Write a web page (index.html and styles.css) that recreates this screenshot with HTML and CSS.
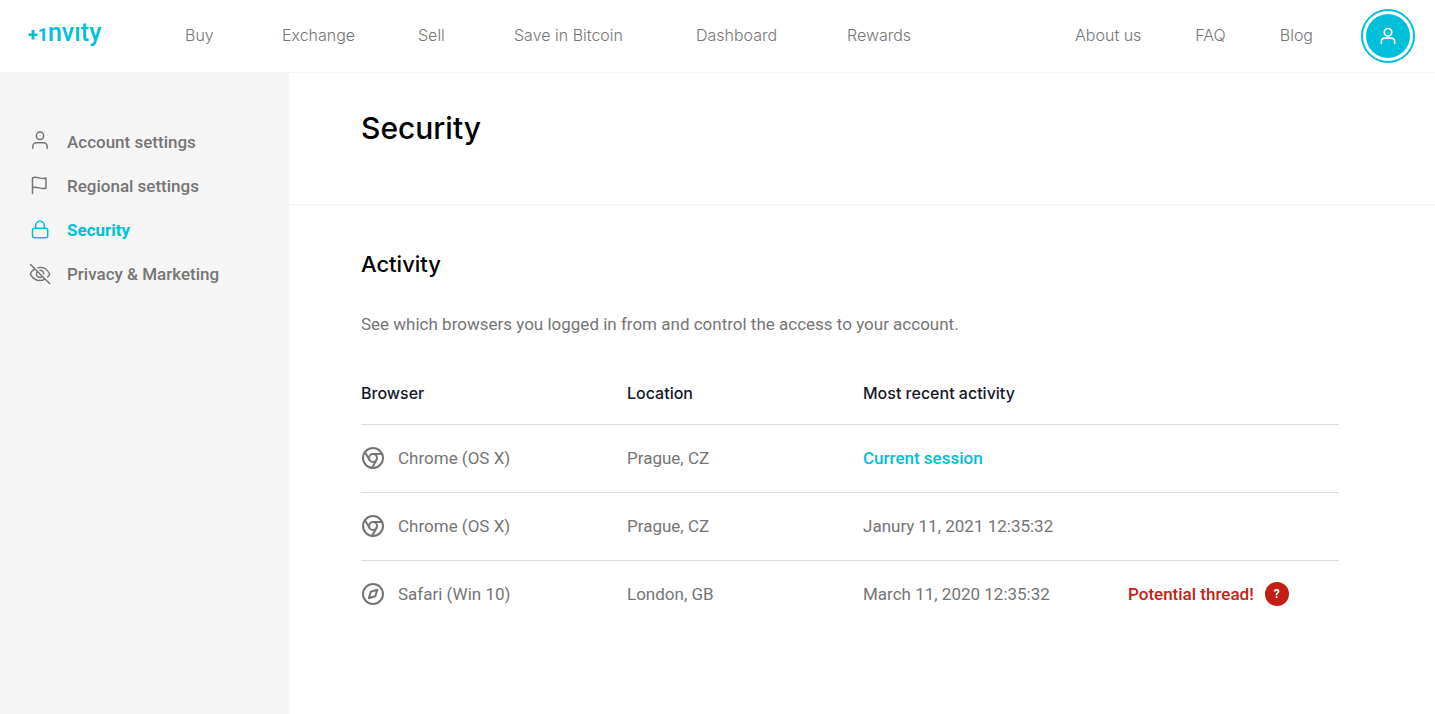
FILE: index.html
```html
<!DOCTYPE html>
<html lang="en">
<head>
<meta charset="utf-8">
<meta name="viewport" content="width=device-width, initial-scale=1">
<title>Invity – Security</title>
<link rel="stylesheet" href="styles.css">
</head>
<body>
<svg width="0" height="0" class="sprite" aria-hidden="true">
  <symbol id="chrome" viewBox="0 0 24 24"><circle cx="12" cy="12" r="10"/><circle cx="12" cy="12" r="4"/><path d="M21 8H12M4 6.200l4.500 7.800M11 21.900l4.400-7.900"/></symbol>
  <symbol id="compass" viewBox="0 0 24 24"><circle cx="12" cy="12" r="10"/><path d="M16.300 7.700l-2 6.500-6.500 2.100 2-6.500z"/></symbol>
</svg>
<header class="topbar">
  <a class="logo" href="#"><span class="logo-plus">+</span><span class="logo-one">1</span><span>nvıty</span></a>
  <nav class="main-nav" aria-label="Main">
    <a href="#">Buy</a>
    <a href="#">Exchange</a>
    <a href="#">Sell</a>
    <a href="#">Save in Bitcoin</a>
    <a href="#">Dashboard</a>
    <a href="#">Rewards</a>
  </nav>
  <nav class="side-nav" aria-label="Company">
    <a href="#">About us</a>
    <a href="#">FAQ</a>
    <a href="#">Blog</a>
  </nav>
  <button class="avatar" aria-label="Account">
    <svg class="avatar-icon" viewBox="0 0 24 24"><circle cx="12" cy="7.500" r="4.500"/><path d="M4 21v-2.500A4 4 0 0 1 8 14.500h8a4 4 0 0 1 4 4V21"/></svg>
  </button>
</header>
<div class="layout">
  <aside class="sidebar">
    <a class="side-link" href="#"><svg class="icon" viewBox="0 0 24 24"><circle cx="12" cy="5.800" r="3.700"/><path d="M4.800 18.300v-2a3.600 3.600 0 0 1 3.600-3.600h7.200a3.600 3.600 0 0 1 3.600 3.600v2"/></svg>Account settings</a>
    <a class="side-link" href="#"><svg class="icon" viewBox="0 0 24 24"><path d="M4.500 19.500V4c4-2.500 8.500 2.200 13.500 0v10c-5 2.200-9.500-2.500-13.500 0"/></svg>Regional settings</a>
    <a class="side-link active" href="#" aria-current="page"><svg class="icon" viewBox="0 0 24 24"><rect x="4.500" y="10.300" width="15.200" height="9.500" rx="2"/><path d="M7.700 10.300V7.500a4.300 4.300 0 0 1 8.600 0v2.800"/></svg>Security</a>
    <a class="side-link" href="#"><svg class="icon" viewBox="0 0 24 24"><path d="M2.500 2.500l19 19M7 6.800C4.800 8 3.200 10 2.300 12c2.600 5.500 9 8.700 14.800 4.800M10 5.700c5-1.200 9.500 1.700 11.700 6.300a13 13 0 0 1-2 3M9.500 9.500a3.500 3.500 0 0 0 5 5M12 8.300A3.700 3.700 0 0 1 15.700 12"/></svg>Privacy &amp; Marketing</a>
  </aside>
  <main class="content">
    <div class="page-head"><h1>Security</h1></div>
    <section class="activity">
      <h2>Activity</h2>
      <p class="intro">See which browsers you logged in from and control the access to your account.</p>
      <table class="sessions">
        <colgroup><col class="col-browser"><col class="col-location"><col class="col-recent"><col></colgroup>
        <thead>
          <tr><th scope="col">Browser</th><th scope="col">Location</th><th scope="col">Most recent activity</th><td></td></tr>
        </thead>
        <tbody>
          <tr><td><span class="with-icon"><svg class="browser-icon"><use href="#chrome"/></svg>Chrome (OS X)</span></td><td>Prague, CZ</td><td class="current">Current session</td><td></td></tr>
          <tr><td><span class="with-icon"><svg class="browser-icon"><use href="#chrome"/></svg>Chrome (OS X)</span></td><td>Prague, CZ</td><td>Janury 11, 2021 12:35:32</td><td></td></tr>
          <tr><td><span class="with-icon"><svg class="browser-icon"><use href="#compass"/></svg>Safari (Win 10)</span></td><td>London, GB</td><td>March 11, 2020 12:35:32</td><td><span class="warning">Potential thread! <button class="help">?</button></span></td></tr>
        </tbody>
      </table>
    </section>
  </main>
</div>
</body>
</html>
```
FILE: styles.css
```css
* { box-sizing: border-box; }
body {
  margin: 0;
  min-height: 100vh;
  display: flex;
  flex-direction: column;
  background: #fff;
  color: #757575;
  font: 400 17px/24px Roboto, "Liberation Sans", sans-serif;
}
a { color: inherit; text-decoration: none; }
button { border: 0; padding: 0; font: inherit; cursor: pointer; }
.sprite { position: absolute; }
svg { fill: none; stroke: currentColor; stroke-linecap: round; stroke-linejoin: round; }

.topbar {
  display: flex;
  align-items: center;
  min-height: 73px;
  padding: 0 20px 0 28px;
  border-bottom: 1px solid #f4f4f4;
}
.logo {
  display: flex;
  align-items: baseline;
  width: 157px;
  padding-bottom: 4px;
  color: #00bfd9;
  font-size: 25px;
  font-weight: 500;
  line-height: 32px;
}
.logo-plus { font-size: 18px; font-weight: 900; }
.logo-one { font-size: 18px; font-weight: 700; }
.main-nav, .side-nav {
  padding-bottom: 2px;
  font: 300 16px/24px Inter, "Liberation Sans", sans-serif;
  white-space: nowrap;
}
.main-nav { display: grid; grid-template-columns: 97px 136px 96px 182px 151px auto; }
.side-nav { display: flex; gap: 54px; margin: 0 48px 0 auto; }
.avatar {
  display: grid;
  place-items: center;
  width: 54px;
  height: 54px;
  border: 2px solid #00bfd9;
  border-radius: 50%;
  padding: 3px;
  background: #00bfd9 content-box;
  color: #fff;
}
.avatar-icon { width: 20px; height: 20px; stroke-width: 2; }

.layout { flex: 1; display: grid; grid-template-columns: 289px 1fr; }
.sidebar {
  display: flex;
  flex-direction: column;
  gap: 20px;
  padding: 57px 28px;
  background: #f5f5f5;
  font-weight: 500;
}
.side-link { display: flex; align-items: center; gap: 15px; }
.side-link.active { color: #00bfd9; font-weight: 700; }
.icon { width: 24px; height: 24px; stroke-width: 1.5; }

h1, h2 { margin: 0; color: #000; font-family: Inter, "Liberation Sans", sans-serif; font-weight: 500; }
h1 { font-size: 30px; line-height: 40px; }
h2 { font-size: 22px; line-height: 32px; }
.page-head { padding: 35px 72px 56px; border-bottom: 1px solid #f4f4f4; }
.activity { padding: 43px 96px 40px 72px; }
.intro { margin: 32px 0 45px; }

.sessions { width: 100%; border-collapse: collapse; table-layout: fixed; }
.col-browser { width: 266px; }
.col-location { width: 236px; }
.col-recent { width: 265px; }
th, td { padding: 0; text-align: left; }
th {
  padding-bottom: 19px;
  color: #14172b;
  font: 500 16px/24px Inter, "Liberation Sans", sans-serif;
}
tbody td { height: 68px; padding-bottom: 2px; border-top: 1px solid #dedede; }
.with-icon, .warning { display: flex; align-items: center; gap: 13px; }
.browser-icon { width: 24px; height: 24px; stroke-width: 2; }
.current { color: #00bfd9; font-weight: 500; }
.warning { gap: 11px; color: #c41e14; font-weight: 500; }
.help {
  width: 24px;
  height: 24px;
  border-radius: 50%;
  background: #c41e14;
  color: #fff;
  font-size: 12px;
  font-weight: 700;
}
```
